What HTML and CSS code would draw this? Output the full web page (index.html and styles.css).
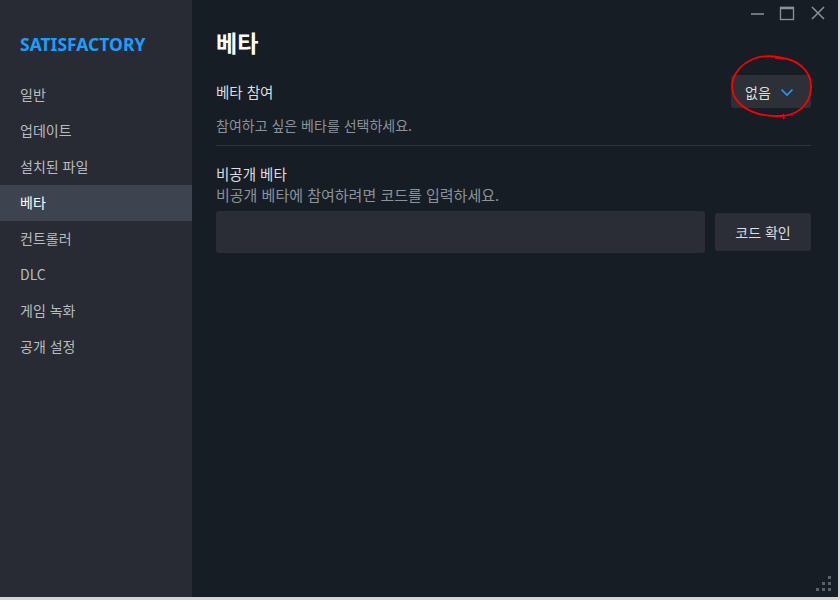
FILE: index.html
```html
<!DOCTYPE html>
<html lang="ko">
<head>
  <meta charset="UTF-8">
  <title>SATISFACTORY - 속성</title>
  <link rel="stylesheet" href="styles.css">
</head>
<body>
  <div class="window">
    <div class="sidebar">
      <div class="game-title">SATISFACTORY</div>
      <ul class="menu">
        <li>일반</li>
        <li>업데이트</li>
        <li>설치된 파일</li>
        <li class="active">베타</li>
        <li>컨트롤러</li>
        <li>DLC</li>
        <li>게임 녹화</li>
        <li>공개 설정</li>
      </ul>
    </div>

    <div class="main">
      <div class="titlebar">
        <svg class="win-btn" width="32" height="22" viewBox="0 0 32 22">
          <line x1="9" y1="14" x2="22" y2="14" stroke="#8b929a" stroke-width="1.5"/>
        </svg>
        <svg class="win-btn" width="32" height="22" viewBox="0 0 32 22">
          <rect x="7.5" y="7.5" width="13" height="12" fill="none" stroke="#8b929a" stroke-width="1.3"/>
          <line x1="7" y1="8" x2="21" y2="8" stroke="#8b929a" stroke-width="2.5"/>
        </svg>
        <svg class="win-btn" width="32" height="22" viewBox="0 0 32 22">
          <path d="M8 7 L20 19 M20 7 L8 19" stroke="#8b929a" stroke-width="1.5"/>
        </svg>
      </div>

      <div class="content">
        <h1>베타</h1>

        <div class="row">
          <div class="label">베타 참여</div>
          <div class="dropdown">
            <span>없음</span>
            <svg width="14" height="10" viewBox="0 0 14 10">
              <path d="M1.5 2.5 L7 8 L12.5 2.5" fill="none" stroke="#1a9fff" stroke-width="1.6"/>
            </svg>
          </div>
        </div>
        <p class="desc desc-first">참여하고 싶은 베타를 선택하세요.</p>

        <div class="separator"></div>

        <div class="label private-label">비공개 베타</div>
        <p class="desc wide">비공개 베타에 참여하려면 코드를 입력하세요.</p>

        <div class="code-row">
          <div class="code-input"></div>
          <button class="code-btn">코드 확인</button>
        </div>
      </div>

      <div class="grip">
        <span></span><span></span><span></span>
        <span></span><span></span><span></span>
      </div>
    </div>

    <svg class="scribble" width="840" height="600" viewBox="0 0 840 600">
      <path d="M776 58 C795 57 812 70 811 88 C810 105 797 116 780 116 C760 117 741 110 734 96 C728 80 738 64 756 58 C766 55 778 56 790 60"
            fill="none" stroke="#ff0000" stroke-width="1.8" stroke-linecap="round"/>
      <path d="M783 114 L784 119" stroke="#ff0000" stroke-width="1.5"/>
    </svg>
  </div>
</body>
</html>
```

FILE: styles.css
```css
body {
  margin: 0;
  background: #d6d6d6;
  font-family: "Noto Sans CJK KR", "Noto Sans", sans-serif;
}
.window {
  width: 838px;
  height: 597px;
  display: flex;
  position: relative;
  background: #171d25;
  overflow: hidden;
}

/* sidebar */
.sidebar {
  width: 192px;
  flex-shrink: 0;
  background: #282b33;
  padding-top: 32px;
}
.game-title {
  padding-left: 20px;
  height: 24px;
  line-height: 24px;
  font-family: "Noto Sans", sans-serif;
  font-weight: bold;
  font-size: 17.5px;
  color: #1a9fff;
}
.menu {
  list-style: none;
  margin: 21px 0 0;
  padding: 0;
}
.menu li {
  height: 36px;
  line-height: 34px;
  padding-left: 20px;
  font-size: 14px;
  color: #b8bcbf;
}
.menu li.active {
  background: #3d4450;
  color: #fff;
}

/* main */
.main {
  flex: 1;
  display: flex;
  flex-direction: column;
  position: relative;
}
.titlebar {
  height: 26px;
  display: flex;
  justify-content: flex-end;
  padding-right: 2px;
}
.win-btn {
  display: block;
  margin-left: -1px;
}
.content {
  padding: 0 27px 0 24px;
}
h1 {
  margin: 0;
  font-size: 23px;
  line-height: 32px;
  color: #fff;
  font-weight: bold;
}
.row {
  margin-top: 17px;
  display: flex;
  align-items: center;
  justify-content: space-between;
}
.label {
  font-size: 14.5px;
  color: #dcdedf;
}
.dropdown {
  width: 80px;
  height: 33px;
  box-sizing: border-box;
  padding: 0 17px 0 14px;
  background: #2d3037;
  border-radius: 3px;
  display: flex;
  align-items: center;
  justify-content: space-between;
  font-size: 14px;
  color: #dcdedf;
}
.desc {
  margin: 0;
  font-size: 14px;
  line-height: 21px;
  color: #8b929a;
}
.desc.wide {
  font-size: 15px;
}
.desc-first {
  margin-top: 7px;
}
.separator {
  margin-top: 9px;
  height: 1px;
  background: #30353d;
}
.private-label {
  margin-top: 17px;
  line-height: 21px;
}
.code-row {
  margin-top: 6px;
  display: flex;
  align-items: center;
  gap: 10px;
}
.code-input {
  flex: 1;
  height: 42px;
  background: #2a2d35;
  border-radius: 3px;
}
.code-btn {
  width: 96px;
  height: 38px;
  border: none;
  border-radius: 3px;
  background: #2b2e36;
  color: #dcdedf;
  font-family: inherit;
  font-size: 14px;
}

/* resize grip */
.grip {
  position: absolute;
  right: 6px;
  bottom: 5px;
  width: 16px;
  height: 16px;
  display: grid;
  grid-template-columns: repeat(3, 3px);
  grid-template-rows: repeat(3, 3px);
  gap: 3px;
}
.grip span {
  background: #5b6069;
}
.grip span:nth-child(1) { grid-area: 1 / 3; }
.grip span:nth-child(2) { grid-area: 2 / 2; }
.grip span:nth-child(3) { grid-area: 2 / 3; }
.grip span:nth-child(4) { grid-area: 3 / 1; }
.grip span:nth-child(5) { grid-area: 3 / 2; }
.grip span:nth-child(6) { grid-area: 3 / 3; }

.scribble {
  position: absolute;
  left: 0;
  top: 0;
  pointer-events: none;
}
```
